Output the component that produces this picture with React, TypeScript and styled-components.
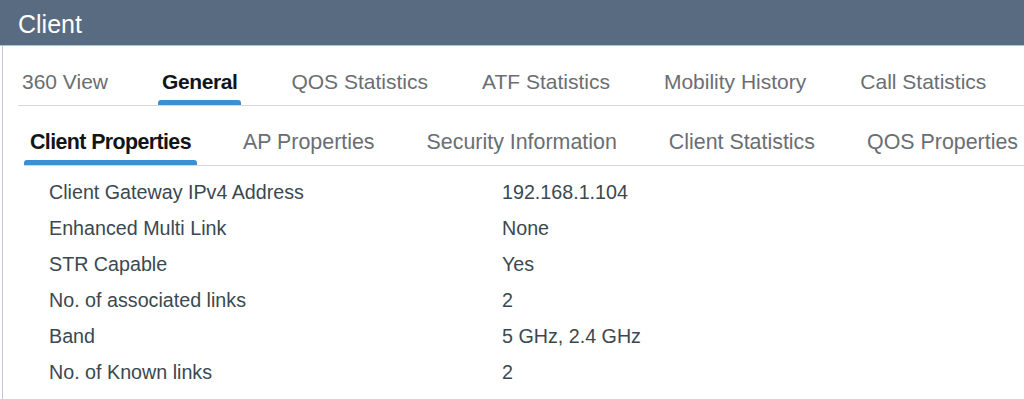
import React from "react";
import styled, { createGlobalStyle } from "styled-components";

const Global = createGlobalStyle`
  html, body { margin: 0; padding: 0; background: #ffffff; }
  body { font-family: "Liberation Sans", Arial, Helvetica, sans-serif; }
  * { box-sizing: border-box; }
`;

const Page = styled.div`
  width: 1024px;
  height: 399px;
  overflow: hidden;
  background: #ffffff;
`;

const Header = styled.div`
  height: 46px;
  background: #596b80;
  border-bottom: 1px solid #a9c3dc;
  display: flex;
  align-items: center;
  padding-left: 18px;
  padding-top: 2px;
  color: #ffffff;
  font-size: 25px;
  line-height: 30px;
`;

const Body = styled.div`
  margin-left: 2px;
  border-left: 1px solid #c3ccd6;
  height: 353px;
`;

const TabBar = styled.div<{ $left: number; $top: number; $gap: number }>`
  display: flex;
  gap: ${(p) => p.$gap}px;
  margin-left: ${(p) => p.$left}px;
  padding-top: ${(p) => p.$top}px;
  border-bottom: 1px solid #d6d8da;
  white-space: nowrap;
`;

const Tab = styled.div<{ $active?: boolean; $pad: number; $size: number; $track: number }>`
  position: relative;
  padding: 0 ${(p) => p.$pad}px 11px;
  font-size: ${(p) => p.$size}px;
  line-height: 24px;
  color: ${(p) => (p.$active ? "#121416" : "#6a6e73")};
  font-weight: ${(p) => (p.$active ? 700 : 400)};
  letter-spacing: ${(p) => (p.$active ? `${p.$track}px` : "0")};
  &::after {
    content: "";
    display: ${(p) => (p.$active ? "block" : "none")};
    position: absolute;
    left: 0;
    right: 0;
    bottom: 0;
    height: 5px;
    background: #3a90d3;
    border-radius: 3px 3px 0 0;
  }
`;

const Rows = styled.div`
  padding-top: 8px;
  padding-left: 46px;
`;

const Row = styled.div`
  display: grid;
  grid-template-columns: 453px 1fr;
  height: 36px;
  align-items: center;
  font-size: 19.7px;
  line-height: 24px;
  color: #3a4850;
`;

const Cell = styled.div``;

const topTabs = [
  "360 View",
  "General",
  "QOS Statistics",
  "ATF Statistics",
  "Mobility History",
  "Call Statistics",
];

const subTabs = [
  "Client Properties",
  "AP Properties",
  "Security Information",
  "Client Statistics",
  "QOS Properties",
];

const rows: [string, string][] = [
  ["Client Gateway IPv4 Address", "192.168.1.104"],
  ["Enhanced Multi Link", "None"],
  ["STR Capable", "Yes"],
  ["No. of associated links", "2"],
  ["Band", "5 GHz, 2.4 GHz"],
  ["No. of Known links", "2"],
];

export default function App() {
  return (
    <Page>
      <Global />
      <Header>Client</Header>
      <Body>
        <TabBar $left={15} $top={24} $gap={46}>
          {topTabs.map((t) => (
            <Tab key={t} $pad={4} $size={21} $track={-0.4} $active={t === "General"}>
              {t}
            </Tab>
          ))}
        </TabBar>
        <TabBar $left={21} $top={24} $gap={40}>
          {subTabs.map((t) => (
            <Tab key={t} $pad={6} $size={21.4} $track={-0.6} $active={t === "Client Properties"}>
              {t}
            </Tab>
          ))}
        </TabBar>
        <Rows>
          {rows.map(([k, v]) => (
            <Row key={k}>
              <Cell>{k}</Cell>
              <Cell>{v}</Cell>
            </Row>
          ))}
        </Rows>
      </Body>
    </Page>
  );
}
